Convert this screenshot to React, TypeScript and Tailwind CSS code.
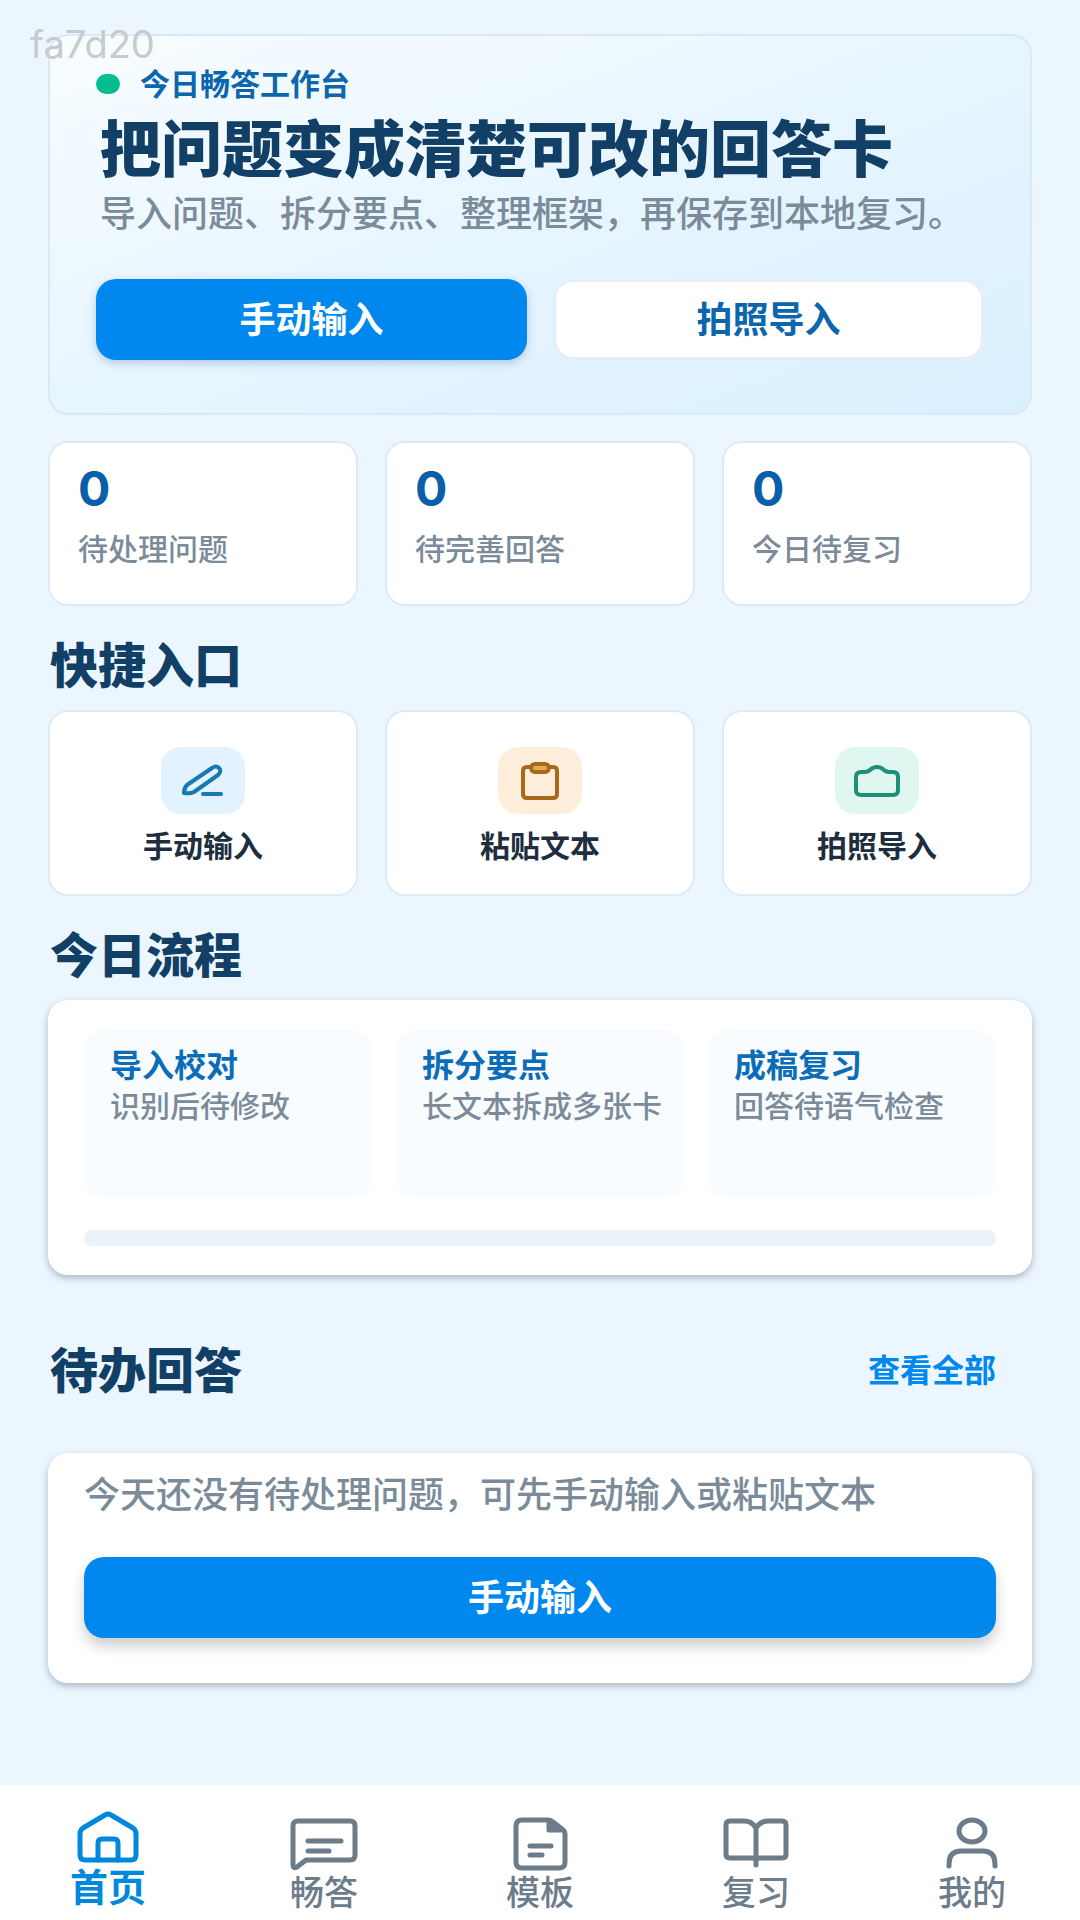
import { useState } from "react";
import type { ReactNode } from "react";

const stats = [
  { label: "待处理问题", value: 0 },
  { label: "待完善回答", value: 0 },
  { label: "今日待复习", value: 0 },
];

const steps = [
  { title: "导入校对", desc: "识别后待修改" },
  { title: "拆分要点", desc: "长文本拆成多张卡" },
  { title: "成稿复习", desc: "回答待语气检查" },
];

const quickEntries = [
  {
    label: "手动输入",
    tile: "bg-[#e3f2ff] text-[#1878b4]",
    icon: (
      <>
        <path d="M23 46q0-5 3-8l25-17q4-3 7 0t-1 7L33 45q-4 2-10 1z" />
        <path d="M42 47h18" />
      </>
    ),
  },
  {
    label: "粘贴文本",
    tile: "bg-[#ffeedb] text-[#a8691a]",
    icon: (
      <>
        <path d="M33 20h-4q-4 0-4 4v23q0 4 4 4h26q4 0 4-4V24q0-4-4-4h-4" />
        <rect x="33" y="17" width="18" height="8" rx="4" fill="#e9a860" />
      </>
    ),
  },
  {
    label: "拍照导入",
    tile: "bg-[#dff7f0] text-[#1f8f78]",
    icon: (
      <path d="M26 25h4q3 0 5-2 3-3 7-3t7 3q2 2 5 2h4q5 0 5 5v13q0 5-5 5H26q-5 0-5-5V30q0-5 5-5z" />
    ),
  },
];

const tabs = [
  {
    key: "home",
    label: "首页",
    icon: (
      <>
        <path d="M8 27q0-4 3-6L33 8q3-2 6 0l22 13q3 2 3 6v21q0 5-5 5H13q-5 0-5-5z" />
        <path d="M26 53V36q0-4 4-4h12q4 0 4 4v17" />
      </>
    ),
  },
  {
    key: "answer",
    label: "畅答",
    icon: (
      <>
        <path d="M5 52V13q0-5 5-5h52q5 0 5 5v29q0 5-5 5H18l-9 7q-4 2-4-2z" />
        <path d="M20 28h33M20 38h21" />
      </>
    ),
  },
  {
    key: "template",
    label: "模板",
    icon: (
      <>
        <path d="M12 13q0-6 6-6h26q3 0 5 2l9 7q3 2 3 5v28q0 6-6 6H18q-6 0-6-6z" />
        <path d="M45 8v9h12z" fill="currentColor" />
        <path d="M26 33h21M26 42h12" />
      </>
    ),
  },
  {
    key: "review",
    label: "复习",
    icon: (
      <path d="M36 52V15q-4-7-12-7H10q-4 0-4 4v29q0 4 4 4h22q4 0 4 3 0-3 4-3h22q4 0 4-4V12q0-4-4-4H48q-8 0-12 7" />
    ),
  },
  {
    key: "mine",
    label: "我的",
    icon: (
      <>
        <ellipse cx="36" cy="18" rx="13" ry="11" />
        <path d="M13 53v-2q0-13 12-13h22q12 0 12 13v2" />
      </>
    ),
  },
];

function SectionTitle({ children }: { children: ReactNode }) {
  return <h2 className="pl-0.5 text-5xl leading-[56px] font-black text-[#123f66]">{children}</h2>;
}

export default function App() {
  const [active, setActive] = useState("home");

  return (
    <div className="relative flex min-h-screen flex-col bg-[#ebf6ff] font-['Inter','Noto_Sans_CJK_SC',sans-serif]">
      <span className="absolute top-6 left-[30px] text-[38px] leading-10 text-[#c6cbcf]">fa7d20</span>

      <main className="flex-1 px-12 pt-[34px] pb-12">
        {/* Hero */}
        <section className="rounded-[20px] border-2 border-[#d9e9f6] bg-linear-to-br from-[#f8fdff] via-[#e7f5ff] to-[#daf0ff] px-[46px] pt-[30px] pb-[53px]">
          <p className="flex items-center gap-5 text-3xl leading-9 font-bold text-[#0b66ad]">
            <span className="h-5 w-6 rounded-full bg-[#06bd92]" />
            今日畅答工作台
          </p>
          <h1 className="mt-3 pl-1 text-[61px] leading-[72px] font-black text-[#123f66]">把问题变成清楚可改的回答卡</h1>
          <p className="mt-2 pl-1 text-4xl leading-10 font-medium text-[#7b8b99]">
            导入问题、拆分要点、整理框架，再保存到本地复习。
          </p>
          <div className="mt-[45px] grid grid-cols-2 gap-[26px]">
            <button
              type="button"
              className="h-[81px] rounded-[20px] bg-[#0088ee] text-4xl font-bold text-white shadow-[0_3px_10px_rgba(20,80,140,0.25)]"
            >
              手动输入
            </button>
            <button
              type="button"
              className="h-[81px] rounded-[20px] border-[3px] border-[#e2f0fc] bg-white bg-clip-padding text-4xl font-bold text-[#0b66ad]"
            >
              拍照导入
            </button>
          </div>
        </section>

        {/* Counters */}
        <section className="mt-[26px] grid grid-cols-3 gap-[27px]">
          {stats.map((s) => (
            <div key={s.label} className="h-[165px] rounded-[20px] border-2 border-[#deebf6] bg-white px-7 pt-[18px]">
              <div className="text-5xl leading-[56px] font-bold text-[#0b5fa8]">{s.value}</div>
              <div className="mt-[14px] text-3xl leading-9 font-medium text-[#7b8b99]">{s.label}</div>
            </div>
          ))}
        </section>

        {/* Quick entries */}
        <section className="mt-8">
          <SectionTitle>快捷入口</SectionTitle>
          <div className="mt-4 grid grid-cols-3 gap-[27px]">
            {quickEntries.map((q) => (
              <button
                key={q.label}
                type="button"
                className="flex h-[186px] flex-col items-center rounded-[20px] border-2 border-[#deebf6] bg-white pt-[35px]"
              >
                <span className={`rounded-[20px] ${q.tile}`}>
                  <svg
                    width="84"
                    height="67"
                    viewBox="0 0 84 67"
                    fill="none"
                    stroke="currentColor"
                    strokeWidth="4"
                    strokeLinecap="round"
                    strokeLinejoin="round"
                  >
                    {q.icon}
                  </svg>
                </span>
                <span className="mt-[14px] text-3xl leading-9 font-bold text-[#1e2e3f]">{q.label}</span>
              </button>
            ))}
          </div>
        </section>

        {/* Today's flow */}
        <section className="mt-8">
          <SectionTitle>今日流程</SectionTitle>
          <div className="mt-4 rounded-[20px] bg-white px-9 pt-[30px] pb-[29px] shadow-[0_3px_7px_rgba(50,70,90,0.35)]">
            <div className="grid grid-cols-3 gap-6">
              {steps.map((s) => (
                <div key={s.title} className="h-[168px] rounded-[20px] bg-[#f8fcff] px-[26px] pt-4">
                  <h3 className="text-[32px] leading-10 font-bold text-[#0b6cb8]">{s.title}</h3>
                  <p className="text-3xl leading-10 font-medium whitespace-nowrap text-[#7b8b99]">{s.desc}</p>
                </div>
              ))}
            </div>
            <div
              role="progressbar"
              aria-valuenow={0}
              aria-valuemin={0}
              aria-valuemax={100}
              className="mt-8 h-4 rounded-full bg-[#eaf2fa]"
            />
          </div>
        </section>

        {/* Pending answers */}
        <section className="mt-[68px]">
          <div className="flex items-center justify-between pr-9">
            <SectionTitle>待办回答</SectionTitle>
            <a href="#all" className="text-[32px] leading-10 font-bold text-[#0088ee]">
              查看全部
            </a>
          </div>
          <div className="mt-[54px] rounded-[20px] bg-white px-9 pt-[22px] pb-[45px] shadow-[0_3px_7px_rgba(50,70,90,0.35)]">
            <p className="text-4xl leading-10 font-medium text-[#7b8b99]">今天还没有待处理问题，可先手动输入或粘贴文本</p>
            <button
              type="button"
              className="mt-[42px] h-[81px] w-full rounded-[20px] bg-[#0088ee] text-4xl font-bold text-white shadow-[0_8px_14px_rgba(0,0,0,0.2)]"
            >
              手动输入
            </button>
          </div>
        </section>
      </main>

      {/* Bottom tabs */}
      <nav className="grid h-[135px] grid-cols-5 items-start bg-white">
        {tabs.map((t) => (
          <button
            key={t.key}
            type="button"
            onClick={() => setActive(t.key)}
            className={`flex flex-col items-center ${
              active === t.key
                ? "pt-[22px] text-[38px] font-bold text-[#0088dd]"
                : "pt-7 text-[34px] font-medium text-[#6d7c8a]"
            }`}
          >
            <svg
              width="72"
              height="60"
              viewBox="0 0 72 60"
              fill="none"
              stroke="currentColor"
              strokeWidth="5"
              strokeLinecap="round"
              strokeLinejoin="round"
            >
              {t.icon}
            </svg>
            <span className="leading-10">{t.label}</span>
          </button>
        ))}
      </nav>
    </div>
  );
}
